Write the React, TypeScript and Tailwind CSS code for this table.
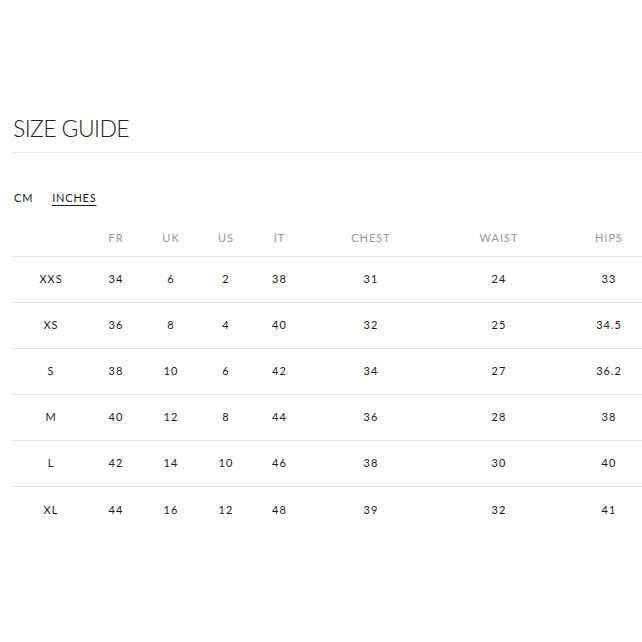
const columns = ["", "FR", "UK", "US", "IT", "CHEST", "WAIST", "HIPS"];

const rows = [
  ["XXS", "34", "6", "2", "38", "31", "24", "33"],
  ["XS", "36", "8", "4", "40", "32", "25", "34.5"],
  ["S", "38", "10", "6", "42", "34", "27", "36.2"],
  ["M", "40", "12", "8", "44", "36", "28", "38"],
  ["L", "42", "14", "10", "46", "38", "30", "40"],
  ["XL", "44", "16", "12", "48", "39", "32", "41"],
];

const grid =
  "grid grid-cols-[76px_54px_56px_54px_53px_130px_126px_94px] w-[643px]";

export default function App() {
  return (
    <div className="w-[642px] h-[642px] bg-white overflow-hidden font-['Lato',sans-serif] text-[#1c1c1c]">
      <div className="pl-[13px] pt-[116px]">
        <div className="pb-[12px] border-b border-[#ececec]">
          <h1 className="text-[23px] leading-[24px] font-light tracking-[-0.6px] text-[#222]">
            SIZE GUIDE
          </h1>
        </div>

        <div className="mt-[37px] flex gap-[19px] text-[11px] leading-[16px] tracking-[0.8px]">
          <span className="pl-px">CM</span>
          <span className="underline underline-offset-[3px]">INCHES</span>
        </div>

        <div className="mt-[14px]">
          <div className={`${grid} h-[37px] border-b border-[#e6e6e6] text-[11px] tracking-[1px] text-[#9a9a9a]`}>
            {columns.map((c, i) => (
              <div key={i} className="flex items-center justify-center">
                {c}
              </div>
            ))}
          </div>
          {rows.map((row, r) => (
            <div
              key={r}
              className={`${grid} h-[46px] text-[11px] tracking-[1px] ${
                r < rows.length - 1 ? "border-b border-[#e6e6e6]" : ""
              }`}
            >
              {row.map((v, i) => (
                <div key={i} className="flex items-center justify-center">
                  {v}
                </div>
              ))}
            </div>
          ))}
        </div>
      </div>
    </div>
  );
}
